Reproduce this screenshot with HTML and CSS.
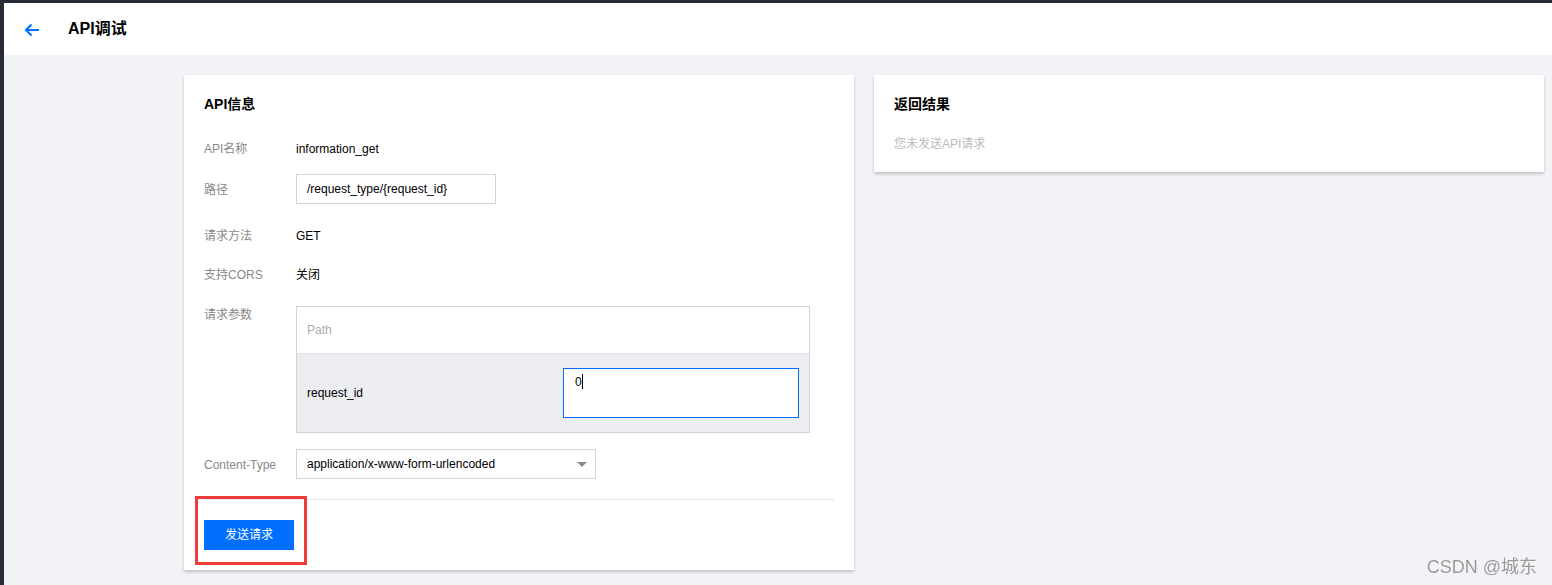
FILE: index.html
```html
<!doctype html>
<html>
<head>
<meta charset="utf-8">
<title>API调试</title>
<link rel="stylesheet" href="styles.css">
</head>
<body>
<div class="head">
	<svg class="back" width="16" height="14" viewBox="0 0 16 14"><path d="M15 7H2M7.5 1.5L2 7l5.5 5.5" fill="none" stroke="#006eff" stroke-width="2"/></svg>
	<h1>API调试</h1>
</div>
<div class="main">
	<div class="card card_left">
		<h2>API信息</h2>
		<div class="row row_name">
			<div class="lab">API名称</div>
			<div class="val">information_get</div>
		</div>
		<div class="row row_path">
			<div class="lab">路径</div>
			<div class="ipt">/request_type/{request_id}</div>
		</div>
		<div class="row row_method">
			<div class="lab">请求方法</div>
			<div class="val">GET</div>
		</div>
		<div class="row row_cors">
			<div class="lab">支持CORS</div>
			<div class="val">关闭</div>
		</div>
		<div class="row row_param">
			<div class="lab lab_top">请求参数</div>
			<div class="ptable">
				<div class="pt_head">Path</div>
				<div class="pt_body">
					<div class="pt_name">request_id</div>
					<div class="pt_ipt">0<span class="caret"></span></div>
				</div>
			</div>
		</div>
		<div class="row row_ct">
			<div class="lab">Content-Type</div>
			<div class="sel">application/x-www-form-urlencoded<span class="tri"></span></div>
		</div>
		<div class="line"></div>
		<div class="btn">发送请求</div>
		<div class="mark"></div>
	</div>
	<div class="card card_right">
		<h2>返回结果</h2>
		<p class="tip">您未发送API请求</p>
	</div>
</div>
<div class="wm">CSDN @城东</div>
</body>
</html>
```

FILE: styles.css
```css
*{margin:0; padding:0; box-sizing:border-box;}
html,body{height:100%;}
body{background:#f2f3f7; border-top:3px solid #262b35; border-left:4px solid #262b35; font-family:"Liberation Sans","Noto Sans CJK SC",sans-serif; font-size:12px; color:#000;}
.head{height:52px; background:#fff; display:flex; align-items:center; padding-left:20px;}
.back{display:block; margin-right:28px; margin-top:1px;}
.head h1{font-size:16px; font-weight:bold; line-height:20px; color:#000;}
.main{display:flex; align-items:flex-start; gap:20px; padding:20px 8px 0 180px;}
.card{background:#fff; box-shadow:0 2px 3px rgba(0,0,0,.2); padding:20px;}
.card_left{width:670px; position:relative;}
.card_right{flex:1; padding-bottom:20px;}
.card h2{font-size:14px; font-weight:bold; line-height:18px;}
.row{display:flex; align-items:center; min-height:30px;}
.lab{width:92px; color:#888; line-height:16px; padding-top:2px; flex-shrink:0;}
.lab_top{align-self:flex-start; padding-top:1px;}
.val{line-height:16px; padding-top:2px; color:#000;}
.row_name{margin-top:20px;}
.row_path{margin-top:11px;}
.row_method{margin-top:16px;}
.row_cors{margin-top:9px;}
.row_param{margin-top:17px; align-items:flex-start;}
.row_ct{margin-top:16px;}
.ipt{width:200px; height:30px; line-height:28px; border:1px solid #d0d4dc; padding:0 10px; color:#000;}
.ptable{width:514px; border:1px solid #d0d4dc;}
.pt_head{height:46px; line-height:46px; padding-left:10px; color:#aaa;}
.pt_body{height:79px; background:#ebedf1; border-top:1px solid #dfe2e8; display:flex; align-items:center; padding:0 10px;}
.pt_name{flex:1; color:#000;}
.pt_ipt{width:236px; height:50px; background:#fff; border:1px solid #006eff; padding:5px 11px; line-height:16px; color:#000;}
.caret{display:inline-block; width:1px; height:15px; background:#000; vertical-align:-3px;}
.sel{width:300px; height:30px; line-height:28px; border:1px solid #d0d4dc; padding:0 10px; position:relative; color:#000;}
.tri{position:absolute; right:8px; top:12px; border-left:5px solid transparent; border-right:5px solid transparent; border-top:5px solid #888;}
.line{height:1px; background:#e5e5e5; margin-top:20px;}
.btn{width:90px; height:30px; line-height:30px; background:#006eff; color:#fff; text-align:center; margin-top:20px;}
.mark{position:absolute; left:11px; top:421px; width:112px; height:69px; border:3px solid #ef3a3a;}
.tip{margin-top:21px; line-height:16px; padding-top:2px; color:#bbb;}
.wm{position:fixed; right:15px; bottom:7px; font-size:18px; line-height:22px; color:#999; text-shadow:0 0 1px #fff;}
```
